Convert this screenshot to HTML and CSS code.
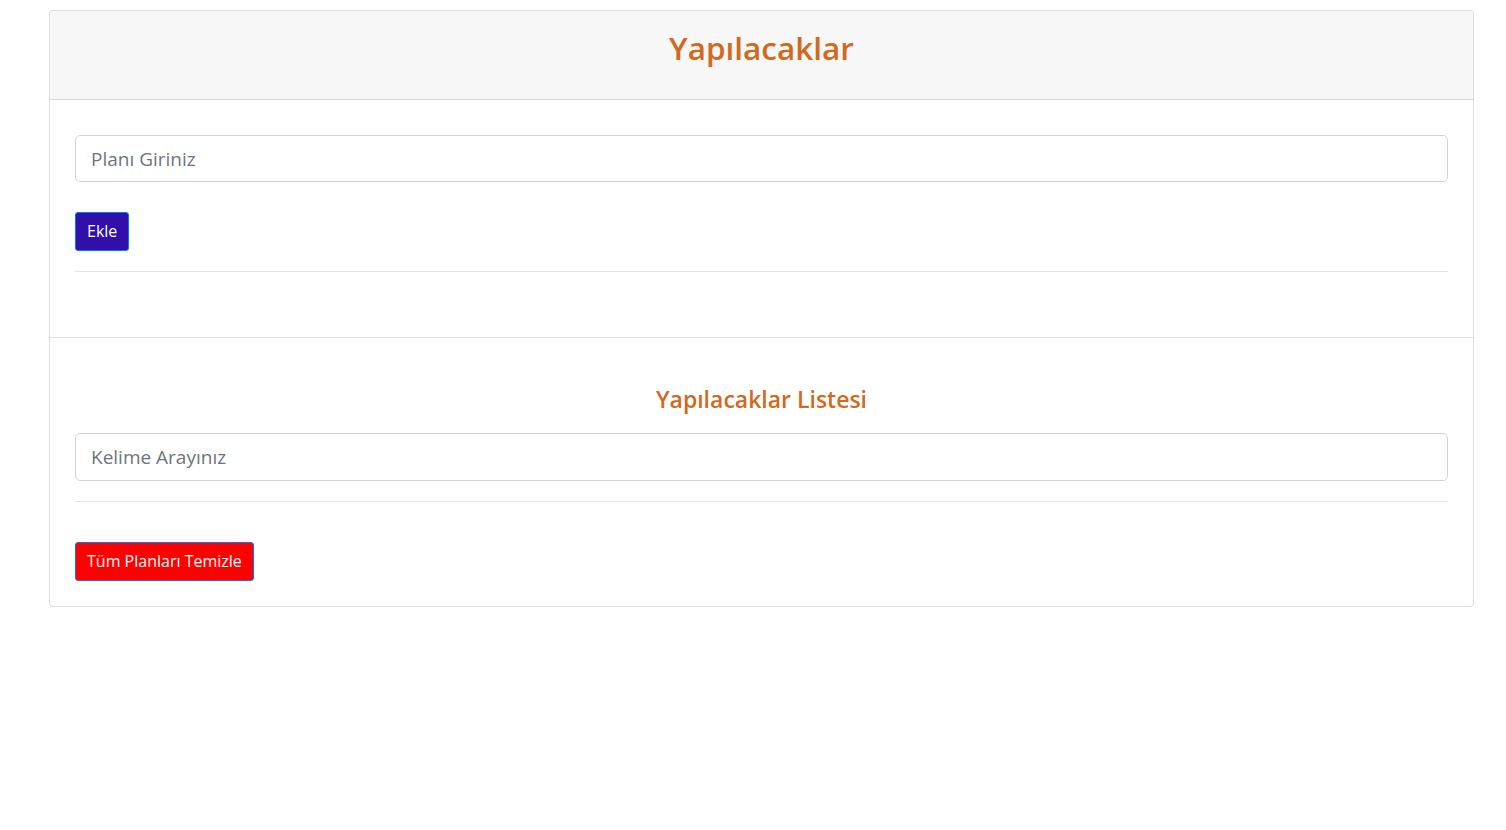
FILE: index.html
```html
<!DOCTYPE html>
<html lang="tr">
<head>
<meta charset="utf-8">
<title>Yapılacaklar</title>
<link rel="stylesheet" href="styles.css">
</head>
<body>
<div class="card">
  <div class="card-header">
    <h2 class="title">Yapılacaklar</h2>
  </div>
  <div class="card-body first">
    <form class="todo-form">
      <input class="form-control plan" type="text" placeholder="Planı Giriniz">
      <button type="button" class="btn btn-add">Ekle</button>
    </form>
    <hr class="divider">
  </div>
  <div class="card-body second">
    <h4 class="subtitle">Yapılacaklar Listesi</h4>
    <input class="form-control" type="text" placeholder="Kelime Arayınız">
    <hr class="divider gap">
    <button type="button" class="btn btn-clear">Tüm Planları Temizle</button>
  </div>
</div>
</body>
</html>
```

FILE: styles.css
```css
* { box-sizing: border-box; }

html, body {
  margin: 0;
  padding: 0;
  background: #fff;
}

body {
  font-family: "Open Sans", "Noto Sans", sans-serif;
  font-size: 16px;
  color: #212529;
  padding: 10px 32px 0 49px;
}

.card {
  border: 1px solid rgba(0, 0, 0, 0.125);
  border-radius: 4px;
  width: 1425px;
  background: #fff;
}

.card-header {
  background: #f7f7f7;
  border-bottom: 1px solid rgba(0, 0, 0, 0.125);
  border-radius: 3px 3px 0 0;
  padding: 18px 25px 32px;
  text-align: center;
}

.title {
  margin: 0;
  font-size: 31.5px;
  line-height: 38px;
  font-weight: 600;
  color: #d2691e;
}

.card-body {
  padding: 0 25px;
}

.card-body.first {
  padding-top: 35px;
  padding-bottom: 65px;
  border-bottom: 1px solid rgba(0, 0, 0, 0.125);
}

.card-body.second {
  padding-top: 47px;
  padding-bottom: 25px;
}

.todo-form {
  display: flex;
  flex-direction: column;
  align-items: flex-start;
  gap: 30px;
  margin: 0;
}

.form-control {
  display: block;
  width: 100%;
  height: 48px;
  padding: 8px 15px;
  font-family: inherit;
  font-size: 19px;
  color: #495057;
  background: #fff;
  border: 1px solid #ced4da;
  border-radius: 5px;
  outline: none;
}

.form-control.plan {
  height: 47px;
}

.form-control::placeholder {
  color: #6c757d;
  opacity: 1;
}

.btn {
  display: inline-block;
  height: 39px;
  padding: 0 11px;
  font-family: inherit;
  font-size: 16px;
  line-height: 37px;
  color: #fff;
  border: 1px solid #007bff;
  border-radius: 3px;
  cursor: pointer;
}

.btn-add {
  background: #3010a8;
}

.btn-clear {
  background: #ff0000;
}

.divider {
  margin: 20px 0 0;
  border: 0;
  border-top: 1px solid rgba(0, 0, 0, 0.1);
}

.divider.gap {
  margin: 20px 0 40px;
}

.subtitle {
  margin: 0 0 19px;
  text-align: center;
  font-size: 23px;
  line-height: 29px;
  font-weight: 600;
  color: #d2691e;
}
```
